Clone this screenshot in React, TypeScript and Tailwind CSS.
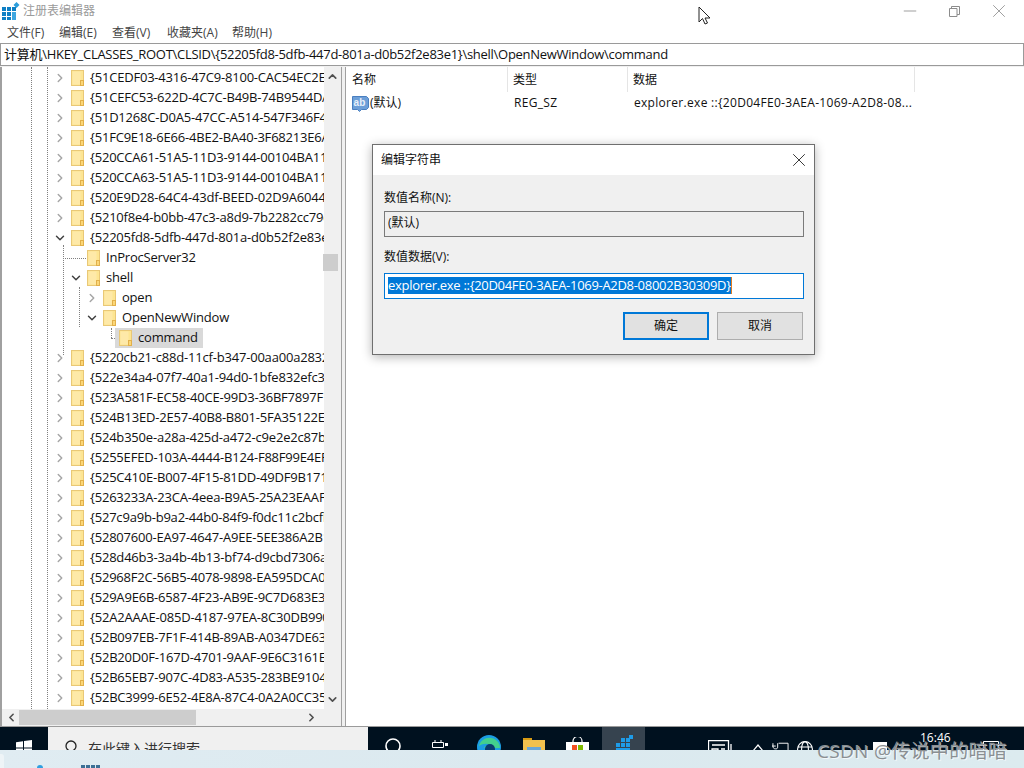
import { ChevronRight, ChevronDown, ChevronUp, ChevronLeft, X, Minus } from "lucide-react";

const ui = { fontFamily: "'Open Sans', 'Noto Sans CJK SC', sans-serif" };

type Row = { label: string; depth: number; arrow?: "right" | "down" | "none"; selected?: boolean };

const rows: Row[] = [
  { label: "{51CEDF03-4316-47C9-8100-CAC54EC2EB5A}", depth: 0 },
  { label: "{51CEFC53-622D-4C7C-B49B-74B9544DA6B1}", depth: 0 },
  { label: "{51D1268C-D0A5-47CC-A514-547F346F4B2E}", depth: 0 },
  { label: "{51FC9E18-6E66-4BE2-BA40-3F68213E6A1C}", depth: 0 },
  { label: "{520CCA61-51A5-11D3-9144-00104BA11C5E}", depth: 0 },
  { label: "{520CCA63-51A5-11D3-9144-00104BA11C5E}", depth: 0 },
  { label: "{520E9D28-64C4-43df-BEED-02D9A6044B1C}", depth: 0 },
  { label: "{5210f8e4-b0bb-47c3-a8d9-7b2282cc79ed}", depth: 0 },
  { label: "{52205fd8-5dfb-447d-801a-d0b52f2e83e1}", depth: 0, arrow: "down" },
  { label: "InProcServer32", depth: 1, arrow: "none" },
  { label: "shell", depth: 1, arrow: "down" },
  { label: "open", depth: 2 },
  { label: "OpenNewWindow", depth: 2, arrow: "down" },
  { label: "command", depth: 3, arrow: "none", selected: true },
  { label: "{5220cb21-c88d-11cf-b347-00aa00a2832e}", depth: 0 },
  { label: "{522e34a4-07f7-40a1-94d0-1bfe832efc3a}", depth: 0 },
  { label: "{523A581F-EC58-40CE-99D3-36BF7897F1C2}", depth: 0 },
  { label: "{524B13ED-2E57-40B8-B801-5FA35122E6D4}", depth: 0 },
  { label: "{524b350e-a28a-425d-a472-c9e2e2c87ba1}", depth: 0 },
  { label: "{5255EFED-103A-4444-B124-F88F99E4EF1A}", depth: 0 },
  { label: "{525C410E-B007-4F15-81DD-49DF9B171A2C}", depth: 0 },
  { label: "{5263233A-23CA-4eea-B9A5-25A23EAAF1B3}", depth: 0 },
  { label: "{527c9a9b-b9a2-44b0-84f9-f0dc11c2bcfb}", depth: 0 },
  { label: "{52807600-EA97-4647-A9EE-5EE386A2B1C4}", depth: 0 },
  { label: "{528d46b3-3a4b-4b13-bf74-d9cbd7306a12}", depth: 0 },
  { label: "{52968F2C-56B5-4078-9898-EA595DCA0E1D}", depth: 0 },
  { label: "{529A9E6B-6587-4F23-AB9E-9C7D683E3C50}", depth: 0 },
  { label: "{52A2AAAE-085D-4187-97EA-8C30DB990436}", depth: 0 },
  { label: "{52B097EB-7F1F-414B-89AB-A0347DE6391C}", depth: 0 },
  { label: "{52B20D0F-167D-4701-9AAF-9E6C3161E4A7}", depth: 0 },
  { label: "{52B65EB7-907C-4D83-A535-283BE9104DF0}", depth: 0 },
  { label: "{52BC3999-6E52-4E8A-87C4-0A2A0CC35A11}", depth: 0 },
];

function Folder() {
  return (
    <svg width="13" height="16" viewBox="0 0 13 16" className="shrink-0">
      <rect x="0.5" y="0.5" width="12" height="15" fill="#fde592" stroke="#e9c877" />
      <rect x="1.5" y="1.5" width="8" height="13" fill="#fee9a8" />
      <rect x="9.5" y="10.5" width="3" height="5" fill="#fbd778" stroke="#e2b04a" />
    </svg>
  );
}

function TreeRow({ row }: { row: Row }) {
  const arrow = row.arrow ?? "right";
  return (
    <div className="flex h-5 items-center" style={{ paddingLeft: 55 + row.depth * 16 }}>
      <span className="flex w-[10px] justify-center mr-[6px]">
        {arrow === "right" && <ChevronRight size={14} strokeWidth={2.5} className="shrink-0 text-[#a6a6a6]" />}
        {arrow === "down" && <ChevronDown size={14} strokeWidth={2.5} className="shrink-0 text-[#404040]" />}
      </span>
      <div className={`flex h-5 items-center ${row.selected ? "bg-[#d9d9d9] pl-[4px] pr-[5px] -ml-[4px]" : ""}`}>
        <Folder />
        <span className="ml-[6px] whitespace-nowrap tracking-[-0.2px]">{row.label}</span>
      </div>
    </div>
  );
}

function TreeGuides() {
  return (
    <>
      <div className="absolute left-[29px] top-0 h-full border-l border-dotted border-[#808080]" />
      <div className="absolute left-[45px] top-0 h-full border-l border-dotted border-[#808080]" />
      <div className="absolute left-[61px] top-[178px] h-[110px] border-l border-dotted border-[#808080]" />
      <div className="absolute left-[61px] top-[191px] w-[25px] border-t border-dotted border-[#808080]" />
      <div className="absolute left-[77px] top-[220px] h-[40px] border-l border-dotted border-[#808080]" />
      <div className="absolute left-[109px] top-[261px] h-[10px] border-l border-dotted border-[#808080]" />
      <div className="absolute left-[109px] top-[271px] w-[6px] border-t border-dotted border-[#808080]" />
    </>
  );
}

function TreePane() {
  return (
    <div className="flex h-full w-[342px] shrink-0 flex-col border-r border-[#a0a0a0] border-l-2 border-l-[#a0a0a0]">
      <div className="flex min-h-0 flex-1">
        <div className="relative min-w-0 flex-1 overflow-hidden bg-white pt-[1px] text-[13px] text-[#111]">
          <TreeGuides />
          <div className="relative -ml-[2px]">
            {rows.map((row) => (
              <TreeRow key={row.label} row={row} />
            ))}
          </div>
        </div>
        <div className="flex w-[17px] shrink-0 flex-col items-center justify-between bg-[#f0f0f0] py-[3px]">
          <ChevronUp size={13} strokeWidth={3} className="text-[#505050]" />
          <ChevronDown size={13} strokeWidth={3} className="text-[#505050]" />
          <div className="absolute left-[323px] top-[254px] h-[17px] w-[15px] bg-[#cdcdcd]" />
        </div>
      </div>
      <div className="flex h-[17px] shrink-0 items-center bg-[#f0f0f0] pl-[3px] pr-[23px]">
        <ChevronLeft size={13} strokeWidth={3} className="text-[#505050]" />
        <div className="ml-[1px] h-[15px] w-[177px] bg-[#cdcdcd]" />
        <ChevronRight size={13} strokeWidth={3} className="ml-auto text-[#505050]" />
      </div>
    </div>
  );
}

function ValueIcon() {
  return (
    <svg width="17" height="17" viewBox="0 0 17 17" className="shrink-0">
      <path d="M0.5 1.5h14l2 2v9l-2 2h-5l-2 2-2-2h-5z" fill="#6d9fd8" stroke="#4a7fc0" />
      <text x="1.5" y="11" fontSize="10" fontWeight="700" fill="#e8f0fa" fontFamily="'Liberation Sans', sans-serif">ab</text>
    </svg>
  );
}

function ValuePane() {
  return (
    <div className="ml-[3px] h-full min-w-0 flex-1 border-l border-[#a0a0a0] bg-white text-[12px] text-[#111]">
      <div className="flex h-[25px] items-center">
        <div className="flex h-full w-[162px] items-center border-r border-[#e5e5e5] pl-[6px]">名称</div>
        <div className="flex h-full w-[120px] items-center border-r border-[#e5e5e5] pl-[5px]">类型</div>
        <div className="flex h-full w-[287px] items-center border-r border-[#e5e5e5] pl-[5px]">数据</div>
      </div>
      <div className="mt-[1px] flex h-5 items-center tracking-[0.3px]">
        <div className="flex w-[162px] items-center pl-[6px]">
          <ValueIcon />
          <span className="ml-[1px] tracking-normal">(默认)</span>
        </div>
        <div className="w-[120px] pl-[6px]">REG_SZ</div>
        <div className="whitespace-nowrap pl-[6px]">explorer.exe ::{"{"}20D04FE0-3AEA-1069-A2D8-08...</div>
      </div>
    </div>
  );
}

function EditDialog() {
  return (
    <div className="absolute left-[372px] top-[144px] h-[211px] w-[443px] border border-[#6f6f6f] bg-[#f0f0f0] text-[13px] text-[#111] shadow-[0_2px_10px_rgba(0,0,0,0.3)]">
      <div className="flex h-[30px] items-center justify-between bg-white pl-[8px] pr-[4px] text-[12px]">
        <span>编辑字符串</span>
        <X size={22} strokeWidth={0.9} className="text-[#111]" />
      </div>
      <div className="flex flex-col pl-[11px] pr-[10px] pt-[14px]">
        <label className="h-[18px] text-[12px] leading-[18px]">数值名称(N):</label>
        <div className="mt-[4px] flex h-[26px] items-center border border-[#7a7a7a] bg-[#efefef] pb-[2px] pl-[3px] text-[12px]">(默认)</div>
        <label className="mt-[11px] h-[18px] text-[12px] leading-[18px]">数值数据(V):</label>
        <div className="mt-[7px] flex h-[26px] items-center border border-[#0078d7] bg-white pb-[2px] pl-[3px]">
          <span className="whitespace-nowrap border-r border-[#e07b20] bg-[#0078d7] leading-[17px] text-white tracking-[-0.3px]">
            explorer.exe ::{"{"}20D04FE0-3AEA-1069-A2D8-08002B30309D{"}"}
          </span>
        </div>
        <div className="mt-[13px] flex justify-end gap-[8px] pr-[1px] text-[12px]">
          <button className="h-[28px] w-[86px] border-2 border-[#0078d7] bg-[#e1e1e1]">确定</button>
          <button className="h-[28px] w-[86px] border border-[#adadad] bg-[#e1e1e1]">取消</button>
        </div>
      </div>
    </div>
  );
}

function Taskbar() {
  return (
    <div className="flex h-[23px] shrink-0 items-start overflow-hidden bg-[#00111f] text-white">
      <div className="flex h-full w-[48px] justify-center pt-[13px]">
        <svg width="16" height="16" viewBox="0 0 16 16">
          <path d="M0 2.2 7 1.2V7.4H0zM8 1 16 0V7.4H8zM0 8.4H7V14.6L0 13.6zM8 8.4H16V16L8 14.8z" fill="#fff" />
        </svg>
      </div>
      <div className="flex h-full w-[320px] items-start bg-[#f0f0f0] pl-[15px] pt-[13px] text-[14px] text-[#333]">
        <svg width="16" height="16" viewBox="0 0 16 16" fill="none" stroke="#222" strokeWidth="1.3">
          <circle cx="8" cy="6" r="5" />
          <path d="M4.5 10 0.5 15" />
        </svg>
        <span className="ml-[9px] leading-[17px]">在此键入进行搜索</span>
      </div>
      <div className="flex h-full w-[50px] justify-center pt-[11px]">
        <svg width="16" height="16" viewBox="0 0 16 16" fill="none" stroke="#fff" strokeWidth="1.6">
          <circle cx="8" cy="8" r="7" />
        </svg>
      </div>
      <div className="flex h-full w-[44px] justify-center pt-[13px]">
        <svg width="16" height="12" viewBox="0 0 16 12" fill="none" stroke="#fff">
          <path d="M0.5 2.5h11M0.5 7.5h11M0.5 2.5v5M11.5 2.5v5M3 0v2M9 0v2" />
          <rect x="13" y="3" width="3" height="3" fill="#fff" stroke="none" />
        </svg>
      </div>
      <div className="flex h-full w-[54px] justify-center pt-[8px]">
        <svg width="24" height="24" viewBox="0 0 24 24">
          <circle cx="12" cy="12" r="12" fill="#1b9de2" />
          <path d="M2 11C4 3 14 0 20 6c2 2 3 4 3 7H7c1-3 7-4 9-2-4-3-10-3-14 0z" fill="#43d08d" />
          <circle cx="13" cy="14" r="5" fill="#0b3c6f" />
        </svg>
      </div>
      <div className="flex h-full w-[36px] justify-center pt-[11px]">
        <svg width="22" height="18" viewBox="0 0 22 18">
          <rect x="0" y="0" width="9" height="4" fill="#d79b13" />
          <rect x="0" y="2" width="22" height="16" fill="#f2c14e" />
          <rect x="4" y="9" width="14" height="4" fill="#6aa7d8" />
        </svg>
      </div>
      <div className="flex h-full w-[50px] justify-center pt-[10px]">
        <svg width="23" height="20" viewBox="0 0 23 20">
          <path d="M7 6V4a4.5 4.5 0 0 1 9 0v2" fill="none" stroke="#fff" strokeWidth="1.2" />
          <rect x="0" y="5" width="23" height="15" fill="#fff" />
          <rect x="6" y="8" width="5" height="5" fill="#f25022" />
          <rect x="12" y="8" width="5" height="5" fill="#7fba00" />
        </svg>
      </div>
      <div className="flex h-full w-[43px] justify-center bg-[#36434f] pl-[3px] pt-[8px]">
        <svg width="20" height="16" viewBox="0 0 20 16" fill="#1e9ce8">
          <rect x="1" y="8" width="4" height="4" />
          <rect x="6" y="8" width="4" height="4" />
          <rect x="11" y="8" width="4" height="4" />
          <rect x="6" y="3" width="4" height="4" />
          <rect x="11" y="3" width="4" height="4" />
          <rect x="14" y="0" width="4" height="4" />
          <rect x="1" y="13" width="14" height="3" />
        </svg>
      </div>
      <svg width="24" height="20" viewBox="0 0 24 20" fill="none" stroke="#fff" strokeWidth="1.3" className="ml-[63px] mt-[13px]">
        <path d="M0.5 0.5h20v19h-20zM23 4v15M4 5h13M4 9h6v6h-6zM13 9h4M13 13h4" />
      </svg>
      <svg width="12" height="8" viewBox="0 0 12 8" fill="none" stroke="#fff" strokeWidth="1.2" className="ml-[20px] mt-[17px]">
        <path d="M1 7 6 1l5 6" />
      </svg>
      <svg width="17" height="12" viewBox="0 0 18 12" fill="none" stroke="#fff" className="ml-[8px] mt-[14px]">
        <path d="M0 5h4M1 2v3c0 2 1 3 3 3s2-1 2-3V2M7 2h10v9H7" />
      </svg>
      <svg width="16" height="16" viewBox="0 0 16 16" fill="none" stroke="#fff" strokeWidth="1.1" className="ml-[8px] mt-[14px]">
        <circle cx="8" cy="8" r="7.4" />
        <ellipse cx="8" cy="8" rx="3.4" ry="7.4" />
        <path d="M1 6h14M1 10h14" />
      </svg>
      <svg width="14" height="14" viewBox="0 0 14 14" fill="#fff" className="ml-[60px] mt-[15px]">
        <rect x="0" y="0" width="14" height="14" />
      </svg>
      <span className="absolute left-[920px] top-[731px] text-[12px] leading-[14px]">16:46</span>
      <svg width="16" height="12" viewBox="0 0 16 12" fill="none" stroke="#fff" className="ml-[96px] mt-[14px]">
        <path d="M0.5 0.5h15v11h-15z" />
      </svg>
    </div>
  );
}

function BottomStrip() {
  return (
    <div className="relative h-[18px] shrink-0 overflow-hidden bg-gradient-to-r from-[#e0ecf2] via-[#dbe9ef] to-[#dcebef]">
      <div className="absolute left-0 top-[4px] h-[14px] w-[4px] rounded-tr-[3px] bg-[#eef4f7]" />
      <div className="absolute left-[37px] top-[15px] h-[6px] w-[6px] rounded-full bg-[#2f9fe0]" />
      <div className="absolute left-[81px] top-[15px] flex gap-[1px]">
        <div className="h-[3px] w-[4px] bg-[#3c6f95]" />
        <div className="h-[3px] w-[4px] bg-[#3c6f95]" />
        <div className="h-[3px] w-[4px] bg-[#3c6f95]" />
        <div className="h-[3px] w-[4px] bg-[#3c6f95]" />
      </div>
    </div>
  );
}

export default function App() {
  return (
    <div className="relative flex h-[768px] w-[1024px] flex-col overflow-hidden bg-white" style={ui}>
      {/* title bar */}
      <div className="flex h-[22px] shrink-0 items-center justify-between">
        <div className="flex items-center">
          <svg width="18" height="18" viewBox="0 0 18 18" className="ml-[2px] -mt-[1px]">
            <g fill="#0e7fc4">
              <rect x="0" y="5" width="4" height="4" />
              <rect x="5" y="5" width="4" height="4" />
              <rect x="10" y="5" width="4" height="4" />
              <rect x="0" y="10" width="4" height="4" />
              <rect x="5" y="10" width="4" height="4" />
              <rect x="0" y="15" width="4" height="3" />
              <rect x="5" y="15" width="4" height="3" />
            </g>
            <rect x="10" y="10" width="4" height="8" fill="#3fa6e0" />
            <path d="M14.5 0 17.5 3 14.5 6 11.5 3z" fill="#2a9ddb" />
          </svg>
          <span className="ml-[3px] text-[12px] text-[#9a9a9a]">注册表编辑器</span>
        </div>
        <div className="flex items-center text-[#8c8c8c]">
          <Minus size={20} strokeWidth={1} className="mr-[29px]" />
          <svg width="11" height="11" viewBox="0 0 11 11" fill="none" stroke="currentColor" className="mr-[28px]">
            <path d="M0.5 2.5h7.5v8h-7.5zM2.5 2.5v-2h8v8h-2.5" />
          </svg>
          <X size={22} strokeWidth={0.9} className="mr-[14px]" />
        </div>
      </div>

      {/* menu */}
      <div className="flex h-[21px] shrink-0 items-center pl-[7px] text-[12px] text-[#444]">
        <span className="w-[52px]">文件(F)</span>
        <span className="w-[53px]">编辑(E)</span>
        <span className="w-[55px]">查看(V)</span>
        <span className="w-[65px]">收藏夹(A)</span>
        <span>帮助(H)</span>
      </div>

      {/* address bar */}
      <div className="flex h-[23px] shrink-0 items-center border border-[#9a9a9a] pl-[3px] text-[13px] tracking-[-0.28px] text-[#111]">
        计算机\HKEY_CLASSES_ROOT\CLSID\{"{"}52205fd8-5dfb-447d-801a-d0b52f2e83e1{"}"}\shell\OpenNewWindow\command
      </div>

      {/* panes */}
      <div className="flex min-h-0 flex-1 border-b border-[#9a9a9a] bg-[#f0f0f0] pt-[1px]">
        <TreePane />
        <ValuePane />
      </div>

      <Taskbar />
      <BottomStrip />

      <EditDialog />

      {/* mouse cursor */}
      <svg width="14" height="20" viewBox="0 0 14 20" className="absolute left-[698px] top-[6px]">
        <path d="M1 1v15l3.5-3.5L7 18l2.5-1-2.5-5h5z" fill="#fff" stroke="#222" />
      </svg>

      {/* watermark */}
      <div className="absolute left-[817px] top-[739px] whitespace-nowrap text-[19px] leading-[24px] tracking-[0.3px] text-[#8a8f92] [text-shadow:1px_1px_0_rgba(255,255,255,0.7)]">
        CSDN @传说中的暗暗
      </div>
    </div>
  );
}
